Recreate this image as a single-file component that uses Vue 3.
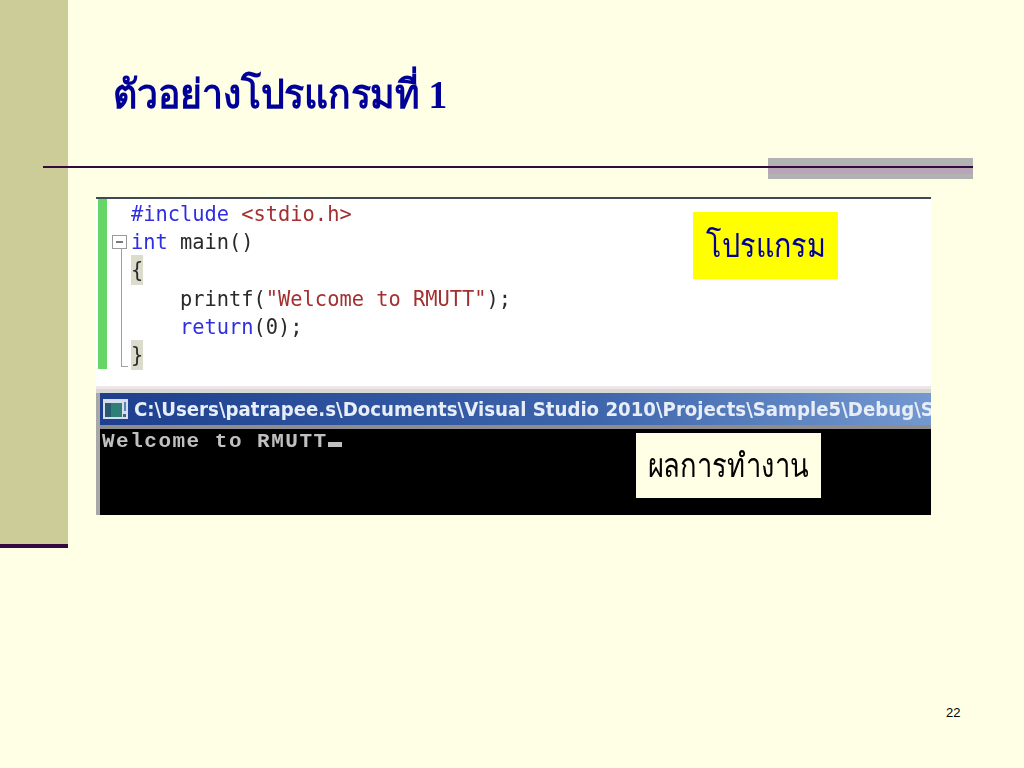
<template>
  <div class="slide">
    <aside class="side"></aside>
    <main class="main">
      <h1 class="title" lang="th">ตัวอย่างโปรแกรมที่ 1</h1>
      <section class="shot">
        <div class="editor">
          <div class="changebar"></div>
          <div class="gutter">
            <span class="fold"></span>
            <span class="foldline"></span>
          </div>
          <pre class="code"><span class="kw">#include</span> <span class="str">&lt;stdio.h&gt;</span>
<span class="kw">int</span> main()
<span class="hl">{</span>
    printf(<span class="str">"Welcome to RMUTT"</span>);
    <span class="kw">return</span>(0);
<span class="hl">}</span></pre>
          <div class="label label-program" lang="th"><span class="squeeze-a">โปรแกรม</span></div>
        </div>
        <div class="gap"></div>
        <div class="console">
          <div class="titlebar">
            <svg class="winicon" width="25" height="20" viewBox="0 0 25 20">
              <rect x="0" y="0" width="25" height="20" fill="#d5deea" />
              <rect x="2" y="4" width="17" height="14" fill="#2f7f78" />
              <rect x="2" y="4" width="6" height="14" fill="#2a5a70" />
              <rect x="21" y="3" width="2" height="9" fill="#5f7fb5" />
              <rect x="20" y="15" width="3" height="3" fill="#4a5f88" />
            </svg>
            <span class="path">C:\Users\patrapee.s\Documents\Visual Studio 2010\Projects\Sample5\Debug\Sample5.exe</span>
          </div>
          <div class="terminal">
            <span class="out">Welcome to RMUTT</span><span class="cursor"></span>
            <div class="label label-result" lang="th"><span class="squeeze-b">ผลการทำงาน</span></div>
          </div>
        </div>
      </section>
    </main>
    <div class="greybar"></div>
    <div class="rule"></div>
    <div class="pageno">22</div>
  </div>
</template>

<script setup>
</script>

<style>
html, body { margin: 0; background: #ffffe5; }
</style>

<style scoped>
.slide {
  position: relative;
  display: flex;
  width: 1024px;
  height: 768px;
  overflow: hidden;
  background: #ffffe5;
  font-family: "Liberation Serif", "Noto Sans", serif;
}
.side {
  flex: none;
  width: 68px;
  height: 544px;
  background: #cccc99;
  border-bottom: 4px solid #33093f;
}
.main {
  flex: 1;
  padding-left: 28px;
}
.title {
  margin: 0 0 0 17px;
  height: 197px;
  box-sizing: border-box;
  padding-top: 65px;
  font-size: 40px;
  line-height: 60px;
  font-weight: 700;
  color: #000099;
  white-space: nowrap;
  transform: scaleX(0.936);
  transform-origin: left top;
}
.shot {
  width: 835px;
  height: 318px;
  display: flex;
  flex-direction: column;
  overflow: hidden;
  filter: blur(0.4px);
}
.editor {
  position: relative;
  height: 189px;
  flex: none;
  display: flex;
  background: #fff;
  border-top: 2px solid #3d4a55;
  box-sizing: border-box;
}
.changebar {
  flex: none;
  width: 9px;
  height: 170px;
  margin-left: 2px;
  background: #66d766;
}
.gutter {
  position: relative;
  flex: none;
  width: 24px;
}
.fold {
  position: absolute;
  left: 5px;
  top: 36px;
  width: 15px;
  height: 14px;
  box-sizing: border-box;
  border: 1px solid #9a9a9a;
  background: linear-gradient(#7a7a7a, #7a7a7a) center / 7px 2px no-repeat;
}
.foldline {
  position: absolute;
  left: 14px;
  top: 50px;
  width: 7px;
  height: 118px;
  box-sizing: border-box;
  border-left: 1px solid #a0a0a0;
  border-bottom: 1px solid #a0a0a0;
}
.code {
  margin: 0;
  padding-top: 1px;
  font-family: "DejaVu Sans Mono", monospace;
  font-size: 20.36px;
  line-height: 28.2px;
  color: #2a2a2a;
}
.kw { color: #2f2fe0; }
.str { color: #a33030; }
.hl { background: #dcdccc; padding: 3px 0; }
.label {
  position: absolute;
  box-sizing: border-box;
  display: flex;
  align-items: center;
  justify-content: center;
  font-size: 33px;
  white-space: nowrap;
}
.squeeze-a { flex: none; transform: scaleX(0.87); }
.squeeze-b { flex: none; transform: scaleX(0.83); }
.label-program {
  left: 597px;
  top: 13px;
  width: 145px;
  height: 67px;
  background: #ffff00;
  color: #000099;
}
.gap {
  flex: none;
  height: 7px;
  background: linear-gradient(#efe6ea 0 40%, #d8d8d4 40%);
}
.console {
  flex: 1;
  display: flex;
  flex-direction: column;
  border-left: 4px solid #a8a8a8;
  min-height: 0;
  background: #000;
}
.titlebar {
  flex: none;
  display: flex;
  align-items: center;
  gap: 6px;
  height: 32px;
  padding-left: 3px;
  background: linear-gradient(90deg, #1d3f8e, #3f66ad 60%, #7499d0);
  border-bottom: 4px solid #8d8d8d;
  overflow: hidden;
}
.winicon { flex: none; }
.path {
  font-family: "DejaVu Sans", "Open Sans", sans-serif;
  font-stretch: condensed;
  font-size: 20.2px;
  font-weight: 700;
  color: #e8eef8;
  white-space: nowrap;
}
.terminal {
  position: relative;
  flex: 1;
  padding: 2px 0 0 2px;
  font-family: "Liberation Mono", monospace;
  font-weight: 700;
  font-size: 21px;
  line-height: 22px;
  letter-spacing: 1.5px;
  color: #c0c0c0;
  white-space: nowrap;
}
.cursor {
  display: inline-block;
  width: 14px;
  height: 5px;
  background: #c0c0c0;
}
.label-result {
  left: 536px;
  top: 4px;
  width: 185px;
  height: 65px;
  background: #ffffe5;
  color: #000;
  letter-spacing: 0;
  font-weight: 400;
  font-family: "Liberation Serif", "Noto Sans", serif;
}
.greybar {
  position: absolute;
  left: 768px;
  top: 158px;
  width: 205px;
  height: 21px;
  background: linear-gradient(#b2b2b2 0 10px, #b8a6b8 10px 16px, #b2b2b2 16px);
}
.rule {
  position: absolute;
  left: 43px;
  top: 166px;
  width: 930px;
  height: 2px;
  background: #33093f;
}
.pageno {
  position: absolute;
  left: 946px;
  top: 705px;
  font-family: "Liberation Sans", sans-serif;
  font-size: 13px;
  color: #000;
}
</style>
